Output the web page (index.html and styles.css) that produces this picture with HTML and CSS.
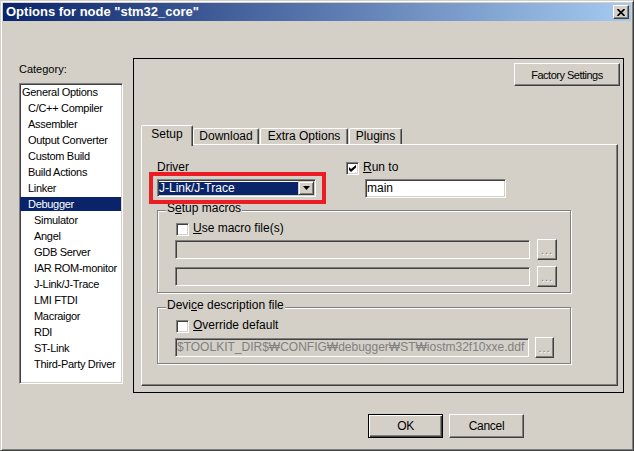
FILE: index.html
```html
<!DOCTYPE html>
<html lang="en">
<head>
    <meta charset="utf-8">
    <title>Options for node "stm32_core"</title>
    <link rel="stylesheet" href="styles.css">
</head>
<body>
    <div class="window">
        <div class="titlebar">
            <span class="title">Options for node "stm32_core"</span>
            <span class="close-btn">
                <svg width="8" height="7" viewBox="0 0 8 7"><path d="M0.5 0 L7.5 7 M7.5 0 L0.5 7" stroke="#000" stroke-width="1.6"/></svg>
            </span>
        </div>

        <div class="client">
            <div class="main">
                <!-- category tree -->
                <div class="category">
                    <div class="cat-label">Category:</div>
                    <div class="tree">
                        <div class="item lvl0">General Options</div>
                        <div class="item lvl1">C/C++ Compiler</div>
                        <div class="item lvl1">Assembler</div>
                        <div class="item lvl1">Output Converter</div>
                        <div class="item lvl1">Custom Build</div>
                        <div class="item lvl1">Build Actions</div>
                        <div class="item lvl1">Linker</div>
                        <div class="item lvl1 sel">Debugger</div>
                        <div class="item lvl2">Simulator</div>
                        <div class="item lvl2">Angel</div>
                        <div class="item lvl2">GDB Server</div>
                        <div class="item lvl2">IAR ROM-monitor</div>
                        <div class="item lvl2">J-Link/J-Trace</div>
                        <div class="item lvl2">LMI FTDI</div>
                        <div class="item lvl2">Macraigor</div>
                        <div class="item lvl2">RDI</div>
                        <div class="item lvl2">ST-Link</div>
                        <div class="item lvl2">Third-Party Driver</div>
                    </div>
                </div>

                <!-- options page -->
                <div class="options">
                    <div class="factory-row">
                        <div class="btn factory">Factory Settings</div>
                    </div>

                    <div class="tabs">
                        <div class="tab active">Setup</div>
                        <div class="tab tab-download">Download</div>
                        <div class="tab tab-extra">Extra Options</div>
                        <div class="tab tab-plugins">Plugins</div>
                    </div>

                    <div class="panel">
                        <div class="top-row">
                            <div class="driver-col">
                                <div class="lbl">Driver</div>
                                <div class="combo">
                                    <div class="combo-value">J-Link/J-Trace</div>
                                    <div class="combo-btn">
                                        <svg width="7" height="4" viewBox="0 0 7 4"><path d="M0 0 H7 L3.5 4 Z" fill="#000"/></svg>
                                    </div>
                                    <div class="callout"></div>
                                </div>
                            </div>
                            <div class="runto-col">
                                <div class="check-row">
                                    <span class="checkbox">
                                        <svg width="7" height="7" viewBox="0 0 7 7"><path d="M0 2 L2 4 L7 0 V2.5 L2 7 L0 5 Z" fill="#000"/></svg>
                                    </span>
                                    <span><u>R</u>un to</span>
                                </div>
                                <div class="field-main">main</div>
                            </div>
                        </div>

                        <div class="group group-macros">
                            <div class="legend"><span>S<u>e</u>tup macros</span></div>
                            <div class="check-row">
                                <span class="checkbox"></span>
                                <span><u>U</u>se macro file(s)</span>
                            </div>
                            <div class="field-row">
                                <div class="field"></div>
                                <div class="btn dots-btn">...</div>
                            </div>
                            <div class="field-row second">
                                <div class="field"></div>
                                <div class="btn dots-btn">...</div>
                            </div>
                        </div>

                        <div class="group group-device">
                            <div class="legend"><span>Devi<u>c</u>e description file</span></div>
                            <div class="check-row">
                                <span class="checkbox"></span>
                                <span><u>O</u>verride default</span>
                            </div>
                            <div class="field-row">
                                <div class="field path">$TOOLKIT_DIR$₩CONFIG₩debugger₩ST₩iostm32f10xxe.ddf</div>
                                <div class="btn dots-btn path-btn">...</div>
                            </div>
                        </div>
                    </div>
                </div>
            </div>

            <div class="buttons">
                <div class="btn dlg-btn default">OK</div>
                <div class="btn dlg-btn">Cancel</div>
            </div>
        </div>
    </div>
</body>
</html>
```

FILE: styles.css
```css
* {
    box-sizing: border-box;
}
body {
    margin: 0;
    background-color: #d4d0c8;
    font-family: "Liberation Sans", "DejaVu Sans", sans-serif;
    font-size: 12px;
    color: #000;
}
.window {
    width: 634px;
    height: 451px;
    padding: 2px;
    background-color: #d4d0c8;
    border: 1px solid;
    border-color: #d4d0c8 #404040 #404040 #d4d0c8;
    box-shadow: inset 1px 1px #fff, inset -1px -1px #808080;
}
.titlebar {
    height: 18px;
    display: flex;
    align-items: flex-start;
    justify-content: space-between;
    background: linear-gradient(to right, #0a246a, #a6caf0);
}
.title {
    color: white;
    font-weight: bold;
    font-size: 13px;
    line-height: 18px;
    padding-left: 3px;
}
.close-btn {
    width: 16px;
    height: 14px;
    margin: 2px 2px 0 0;
    display: flex;
    align-items: center;
    justify-content: center;
    background-color: #d4d0c8;
    border: 1px solid;
    border-color: #fff #404040 #404040 #fff;
    box-shadow: inset -1px -1px #808080;
}

/* shared 3d looks */
.btn {
    background-color: #d4d0c8;
    border: 1px solid;
    border-color: #fff #404040 #404040 #fff;
    box-shadow: inset -1px -1px #808080;
    display: flex;
    align-items: center;
    justify-content: center;
    font-size: 12px;
    letter-spacing: -0.3px;
}
.checkbox,
.field,
.field-main,
.combo {
    border: 1px solid;
    border-color: #808080 #fff #fff #808080;
    box-shadow: inset 1px 1px #404040, inset -1px -1px #d4d0c8;
}

.main {
    display: flex;
    align-items: flex-start;
    margin-top: 37px;
    padding-left: 16px;
}

/* category tree */
.category {
    width: 104px;
}
.cat-label {
    font-size: 11px;
    line-height: 13px;
    margin-top: 5px;
}
.tree {
    margin-top: 7px;
    height: 301px;
    padding-right: 1px;
    background-color: white;
    border: 1px solid;
    border-color: #808080 #fff #fff #808080;
    box-shadow: inset 1px 1px #404040, inset -1px -1px #d4d0c8;
}
.item {
    height: 16px;
    font-size: 11px;
    line-height: 16px;
    letter-spacing: -0.3px;
    white-space: nowrap;
}
.lvl0 { padding-left: 2px; }
.lvl1 { padding-left: 8px; }
.lvl2 { padding-left: 14px; }
.item.sel {
    color: white;
    background: linear-gradient(#0a246a, #0a246a) 0 1px / 100% 14px no-repeat;
}

/* options page */
.options {
    width: 491px;
    height: 335px;
    margin-left: 10px;
    padding: 4px 5px 0 7px;
    border: 1px solid #000;
}
.factory-row {
    display: flex;
    justify-content: flex-end;
    margin-right: -2px;
}
.factory {
    width: 106px;
    height: 23px;
    font-size: 11px;
    letter-spacing: -0.5px;
}
.tabs {
    display: flex;
    align-items: flex-end;
    height: 21px;
    margin-top: 39px;
    margin-bottom: -2px;
}
.tab {
    height: 16px;
    margin-bottom: 2px;
    line-height: 14px;
    text-align: center;
    white-space: nowrap;
    background-color: #d4d0c8;
    border: 1px solid;
    border-bottom: none;
    border-color: #fff #404040 transparent #fff;
    border-radius: 2px 2px 0 0;
    box-shadow: inset -1px 0 #808080;
}
.tab.active {
    position: relative;
    z-index: 1;
    width: 52px;
    height: 21px;
    margin-bottom: 0;
    padding-top: 1px;
}
.tab-download { width: 66px; }
.tab-extra { width: 88px; margin-left: 1px; }
.tab-plugins { width: 53px; margin-left: 1px; }

.panel {
    height: 242px;
    padding: 15px 0 0 15px;
    border: 1px solid;
    border-color: #fff #404040 #404040 #fff;
    box-shadow: inset -1px -1px #808080;
}
.top-row {
    display: flex;
}
.driver-col {
    width: 159px;
}
.lbl {
    line-height: 14px;
}
.combo {
    position: relative;
    display: flex;
    width: 159px;
    height: 18px;
    margin-top: 5px;
    padding: 1px;
    background-color: white;
}
.combo-value {
    flex: 1;
    height: 13px;
    margin-top: 1px;
    color: white;
    background-color: #0a246a;
    line-height: 12px;
    white-space: nowrap;
}
.combo-btn {
    width: 16px;
    height: 14px;
    display: flex;
    align-items: center;
    justify-content: center;
    background-color: #d4d0c8;
    border: 1px solid;
    border-color: #d4d0c8 #404040 #404040 #d4d0c8;
    box-shadow: inset 1px 1px #fff, inset -1px -1px #808080;
}
/* red annotation drawn over the screenshot */
.callout {
    position: absolute;
    left: -9px;
    top: -8px;
    width: 177px;
    height: 32px;
    border: 4px solid #ec1c24;
}
.runto-col {
    margin-left: 30px;
}
.check-row {
    display: flex;
    align-items: flex-start;
    height: 14px;
    line-height: 14px;
    white-space: nowrap;
}
.checkbox {
    width: 13px;
    height: 13px;
    margin-top: 2px;
    margin-right: 4px;
    display: flex;
    align-items: center;
    justify-content: center;
    background-color: white;
}
.field-main {
    width: 141px;
    height: 19px;
    margin: 5px 0 0 19px;
    padding-left: 1px;
    line-height: 17px;
    background-color: white;
}

/* group boxes */
.group {
    width: 414px;
    padding: 0 0 5px 17px;
    border: 1px solid #808080;
    box-shadow: 1px 1px #fff, inset 1px 1px #fff;
}
.group-macros {
    margin-top: 12px;
}
.group-device {
    margin-top: 14px;
}
.legend {
    height: 14px;
    line-height: 14px;
    margin: -10px 0 0 -9px;
}
.legend span {
    padding: 0 1px;
    background-color: #d4d0c8;
}
.group .check-row {
    margin-top: 6px;
    padding-left: 1px;
}
.field-row {
    display: flex;
    align-items: center;
    height: 21px;
    margin-top: 4px;
}
.field-row.second {
    margin-top: 6px;
}
.group-device .field-row {
    margin-top: 5px;
}
.field {
    width: 355px;
    height: 19px;
    background-color: #d4d0c8;
}
.field.path {
    width: 354px;
    padding-left: 1px;
    line-height: 17px;
    color: #808080;
    white-space: nowrap;
    overflow: hidden;
}
.dots-btn {
    width: 20px;
    height: 21px;
    margin-left: 7px;
    font-size: 11px;
    letter-spacing: 1px;
    color: #808080;
    text-shadow: 1px 1px #fff;
}
.path-btn {
    width: 19px;
    margin-left: 6px;
}

/* dialog buttons */
.buttons {
    display: flex;
    gap: 6px;
    margin-top: 21px;
    padding-left: 365px;
}
.dlg-btn {
    width: 75px;
    height: 24px;
}
.dlg-btn.default {
    border-color: #000;
    box-shadow: inset 1px 1px #fff, inset -1px -1px #404040, inset -2px -2px #808080;
}
```
